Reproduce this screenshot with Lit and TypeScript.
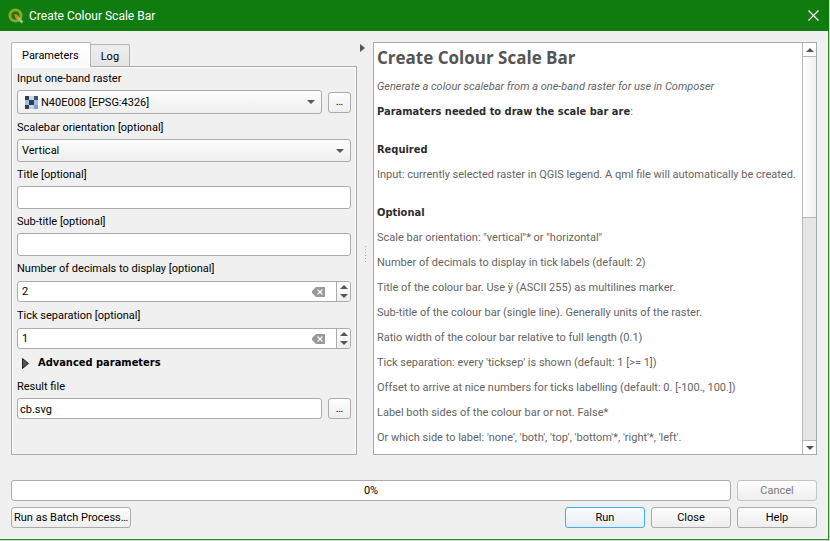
import { LitElement, html, css, svg } from "lit";
import { customElement, property, state } from "lit/decorators.js";

const optionalHelp = [
  'Scale bar orientation: "vertical"* or "horizontal"',
  "Number of decimals to display in tick labels (default: 2)",
  "Title of the colour bar. Use ÿ (ASCII 255) as multilines marker.",
  "Sub-title of the colour bar (single line). Generally units of the raster.",
  "Ratio width of the colour bar relative to full length (0.1)",
  "Tick separation: every 'ticksep' is shown (default: 1 [>= 1])",
  "Offset to arrive at nice numbers for ticks labelling (default: 0. [-100., 100.])",
  "Label both sides of the colour bar or not. False*",
  "Or which side to label: 'none', 'both', 'top', 'bottom'*, 'right'*, 'left'.",
];

/* Shades of the raster layer icon, row by row. */
const rasterCells = [
  "#2f3e54", "#c3d6ea", "#3f5370",
  "#a3bddb", "#2f3e54", "#a3bddb",
  "#2f3e54", "#c3d6ea", "#7f9fc6",
];

const arrow = (dir: "up" | "down") => html`<svg width="8" height="4" viewBox="0 0 8 4" aria-hidden="true">
  <path d=${dir === "up" ? "M4 0 8 4H0Z" : "M0 0H8L4 4Z"} fill="#555" />
</svg>`;

const controlStyles = css`
  * { box-sizing: border-box; }
  button, input, select { font: inherit; color: #000; margin: 0; }
  .btn {
    height: 21px;
    padding: 0 2px;
    border: 1px solid #ababab;
    border-radius: 3px;
    background: linear-gradient(#fefefe, #eeeeee);
    white-space: nowrap;
  }
`;

@customElement("number-field")
export class NumberField extends LitElement {
  @property() label = "";
  @property({ type: Number }) value = 0;

  static styles = [controlStyles, css`
    :host { display: block; }
    label { display: block; line-height: 14px; margin-bottom: 5px; }
    .spin {
      display: flex;
      align-items: center;
      height: 21px;
      border: 1px solid #ababab;
      border-radius: 3px;
      background: #fff;
      overflow: hidden;
    }
    input {
      flex: 1;
      min-width: 0;
      border: 0;
      outline: 0;
      padding: 1px 4px 0;
      background: none;
      appearance: textfield;
    }
    input::-webkit-inner-spin-button { appearance: none; margin: 0; }
    button { border: 0; padding: 0; background: none; }
    .clear { display: flex; margin-right: 11px; }
    .steps {
      align-self: stretch;
      display: flex;
      flex-direction: column;
      width: 14px;
      border-left: 1px solid #ababab;
      background: linear-gradient(#fefefe, #eeeeee);
    }
    .steps button { flex: 1; display: flex; align-items: center; justify-content: center; }
  `];

  render() {
    return html`
      <label for="n">${this.label}</label>
      <div class="spin">
        <input id="n" type="number" .value=${String(this.value)} />
        <button class="clear" aria-label="Clear" @click=${() => (this.value = 0)}>
          <svg width="13" height="10" viewBox="0 0 13 10">
            <path d="M4 0H13V10H4L0 6V4Z" fill="#999" />
            <path d="M5.5 2.5l5 5M10.500 2.500l-5 5" stroke="#fff" stroke-width="1.100" />
          </svg>
        </button>
        <span class="steps">
          <button aria-label="Increase" @click=${() => this.value++}>${arrow("up")}</button>
          <button aria-label="Decrease" @click=${() => this.value--}>${arrow("down")}</button>
        </span>
      </div>`;
  }
}

@customElement("app-root")
export class AppRoot extends LitElement {
  @state() private tab = "Parameters";

  static styles = [controlStyles, css`
    :host {
      display: flex;
      flex-direction: column;
      min-height: 100vh;
      font: 11px/14px Roboto, "Liberation Sans", sans-serif;
      color: #000;
      background: #f0f0f0;
      border: solid #c4dcc4;
      border-width: 0 1px 1px 0;
      box-shadow: inset -1px -1px #2c8a2c;
      box-sizing: border-box;
    }
    .titlebar {
      display: flex;
      align-items: center;
      height: 31px;
      padding: 0 10px 0 8px;
      background: #107c10;
      color: #fff;
      font: 12px/16px Roboto, "Noto Sans", sans-serif;
    }
    .titlebar svg { display: block; }
    .titlebar .name { flex: 1; margin: 0 5px; }
    .titlebar button { border: 0; padding: 0; background: none; }

    .main {
      flex: 1;
      display: grid;
      grid-template-columns: minmax(0, 346fr) 16px minmax(0, 444fr);
      padding: 11px 12px 0 11px;
    }
    .left { display: flex; flex-direction: column; }
    .tabs { display: flex; align-items: flex-end; height: 25px; margin-bottom: -1px; z-index: 1; }
    .tab {
      height: 22px;
      margin: 0 0 1px -1px;
      padding: 2px 10px 0;
      border: 1px solid #b4b4b4;
      border-bottom: 0;
      border-radius: 2px 2px 0 0;
      background: linear-gradient(#eeeeee, #e4e4e4);
    }
    .tab.on { height: 25px; margin: 0; padding: 2px 11px 0 10px; background: linear-gradient(#fff, #fafafa); }
    .pane {
      flex: 1;
      border: 1px solid #ababab;
      padding: 5px 5px 0;
      box-shadow: inset 1px 1px #fbfbfb, inset -1px 0 #fbfbfb;
    }
    .pane label { display: block; margin-bottom: 4px; }
    .row { display: flex; align-items: center; gap: 6px; margin-bottom: 7px; }
    .row > :first-child { flex: 1; min-width: 0; }
    .dots { width: 23px; }
    .combo { display: grid; align-items: center; }
    .combo > * { grid-area: 1 / 1; }
    .combo svg { pointer-events: none; z-index: 1; }
    .combo .raster { margin-left: 8px; }
    .combo .drop { justify-self: end; margin-right: 7px; }
    select {
      appearance: none;
      width: 100%;
      height: 23px;
      padding: 1px 20px 0 4px;
      border: 1px solid #ababab;
      border-radius: 3px;
      background: linear-gradient(#fefefe, #eeeeee);
    }
    .combo.layer select { height: 24px; padding: 2px 20px 0 23px; }
    .spaced { margin-bottom: 6px; }
    .text {
      display: block;
      width: 100%;
      height: 23px;
      padding: 1px 2px 0;
      border: 1px solid #ababab;
      border-radius: 3px;
      background: #fff;
    }
    .row .text { height: 21px; }
    number-field { margin-bottom: 7px; }
    .advanced {
      display: flex;
      align-items: center;
      gap: 9px;
      height: 14px;
      margin: 0 0 10px;
      padding: 0 5px;
      border: 0;
      background: none;
      font: bold 11px/14px "DejaVu Sans Condensed", "Noto Sans", sans-serif;
    }

    .splitter { display: flex; flex-direction: column; align-items: center; }
    .splitter button { display: flex; height: 10px; margin-top: 2px; margin-right: 5px; padding: 0; border: 0; background: none; }
    .grip { margin: auto 0; width: 1px; height: 17px; background: repeating-linear-gradient(#b0b0b0 0 1px, transparent 1px 3px); }

    .help { display: flex; border: 1px solid #ababab; background: #fff; min-width: 0; }
    .doc { flex: 1; min-width: 0; overflow: hidden; padding: 4px 3px 0; color: #646464; }
    .doc h1 { margin: 0 0 11px; font: bold 17px/22px "Open Sans", "Noto Sans", sans-serif; color: #555; }
    .doc p { margin: 0 0 11px; }
    .doc p:last-child { margin: 0; }
    .doc h2 { margin: 24px 0 11px; font: bold 11px/14px "DejaVu Sans Condensed", "Noto Sans", sans-serif; color: #2d2d2d; }
    .doc b { font: bold 11px/1 "DejaVu Sans Condensed", "Noto Sans", sans-serif; color: #2d2d2d; }
    .scroll {
      display: flex;
      flex-direction: column;
      width: 14px;
      border-left: 1px solid #b8b8b8;
      background: #e6e6e6;
    }
    .scroll button { display: flex; align-items: center; justify-content: center; height: 14px; padding: 0; border: 0; background: #fff; }
    .scroll .up { border-bottom: 1px solid #b8b8b8; }
    .scroll .down { border-top: 1px solid #b8b8b8; }
    .track { flex: 1; }
    .thumb { height: 42%; background: linear-gradient(90deg, #fff, #f1f1f1); border-bottom: 1px solid #b8b8b8; }

    .foot {
      display: grid;
      grid-template-columns: 1fr 80px 80px 80px;
      gap: 6px;
      padding: 25px 12px 12px 11px;
    }
    .progress {
      grid-column: 1 / 4;
      height: 21px;
      border: 1px solid #ababab;
      border-radius: 3px;
      background: #fff;
      text-align: center;
      line-height: 20px;
    }
    .batch { justify-self: start; width: 120px; }
    .run { border-color: #3daee9; background: linear-gradient(#fbfdff, #e6ecf1); }
    .btn:disabled { color: #7a7a7a; border-color: #c4c4c4; }
  `];

  render() {
    return html`
      <header class="titlebar">
        <svg width="16" height="16" viewBox="0 0 16 16" aria-hidden="true">
          <circle cx="7.500" cy="7.500" r="5.600" fill="none" stroke="#86a824" stroke-width="3" />
          <path d="M7 7 9.500 7.500 15.500 13.500 13.500 15.500 7.500 9.500Z" fill="#a5bd7c" />
          <path d="M6 6 9 6.500 11 9 9.500 10.500 7 9Z" fill="#ee7913" />
        </svg>
        <span class="name">Create Colour Scale Bar</span>
        <button aria-label="Close window">
          <svg width="11" height="11" viewBox="0 0 11 11"><path d="M.5.5l10 10M10.500.5l-10 10" stroke="#fff" stroke-width="1.200" /></svg>
        </button>
      </header>

      <main class="main">
        <section class="left">
          <div class="tabs" role="tablist">
            ${["Parameters", "Log"].map((t) => html`
              <button class="tab ${t === this.tab ? "on" : ""}" role="tab" aria-selected=${t === this.tab}
                @click=${() => (this.tab = t)}>${t}</button>`)}
          </div>
          <div class="pane">
            <label for="layer">Input one-band raster</label>
            <div class="row">
              <div class="combo layer">
                <select id="layer"><option>N40E008 [EPSG:4326]</option></select>
                <svg class="raster" width="13" height="13" viewBox="0 0 3 3" shape-rendering="crispEdges" aria-hidden="true">
                  ${rasterCells.map((c, i) => svg`<rect x=${i % 3} y=${Math.floor(i / 3)} width="1" height="1" fill=${c} />`)}
                </svg>
                <svg class="drop" width="8" height="4" viewBox="0 0 8 4" aria-hidden="true"><path d="M0 0H8L4 4Z" fill="#555" /></svg>
              </div>
              <button class="btn dots" aria-label="Browse for a raster">…</button>
            </div>
            <label for="orient">Scalebar orientation [optional]</label>
            <div class="combo spaced">
              <select id="orient"><option>Vertical</option><option>Horizontal</option></select>
              <svg class="drop" width="8" height="4" viewBox="0 0 8 4" aria-hidden="true"><path d="M0 0H8L4 4Z" fill="#555" /></svg>
            </div>
            <label for="title">Title [optional]</label>
            <input class="text spaced" id="title" type="text" />
            <label for="subtitle">Sub-title [optional]</label>
            <input class="text spaced" id="subtitle" type="text" />
            <number-field label="Number of decimals to display [optional]" .value=${2}></number-field>
            <number-field label="Tick separation [optional]" .value=${1}></number-field>
            <button class="advanced" aria-expanded="false">
              <svg width="7" height="11" viewBox="0 0 7 11" aria-hidden="true"><path d="M.5.5 6.500 5.500.5 10.500Z" fill="#555" stroke="#222" /></svg>
              Advanced parameters
            </button>
            <label for="result">Result file</label>
            <div class="row">
              <input class="text" id="result" type="text" value="cb.svg" />
              <button class="btn dots" aria-label="Browse for a result file">…</button>
            </div>
          </div>
        </section>

        <div class="splitter">
          <button aria-label="Collapse help">
            <svg width="5" height="8" viewBox="0 0 5 8"><path d="M0 0 5 4 0 8Z" fill="#555" /></svg>
          </button>
          <span class="grip"></span>
        </div>

        <section class="help">
          <article class="doc">
            <h1>Create Colour Scale Bar</h1>
            <p><i>Generate a colour scalebar from a one-band raster for use in Composer</i></p>
            <p><b>Paramaters needed to draw the scale bar are</b>:</p>
            <h2>Required</h2>
            <p>Input: currently selected raster in QGIS legend. A qml file will automatically be created.</p>
            <h2>Optional</h2>
            ${optionalHelp.map((line) => html`<p>${line}</p>`)}
          </article>
          <div class="scroll">
            <button class="up" aria-label="Scroll up">${arrow("up")}</button>
            <div class="track"><div class="thumb"></div></div>
            <button class="down" aria-label="Scroll down">${arrow("down")}</button>
          </div>
        </section>
      </main>

      <footer class="foot">
        <div class="progress" role="progressbar" aria-valuenow="0" aria-valuemin="0" aria-valuemax="100">0%</div>
        <button class="btn" disabled>Cancel</button>
        <button class="btn batch">Run as Batch Process…</button>
        <button class="btn run">Run</button>
        <button class="btn">Close</button>
        <button class="btn">Help</button>
      </footer>`;
  }
}
